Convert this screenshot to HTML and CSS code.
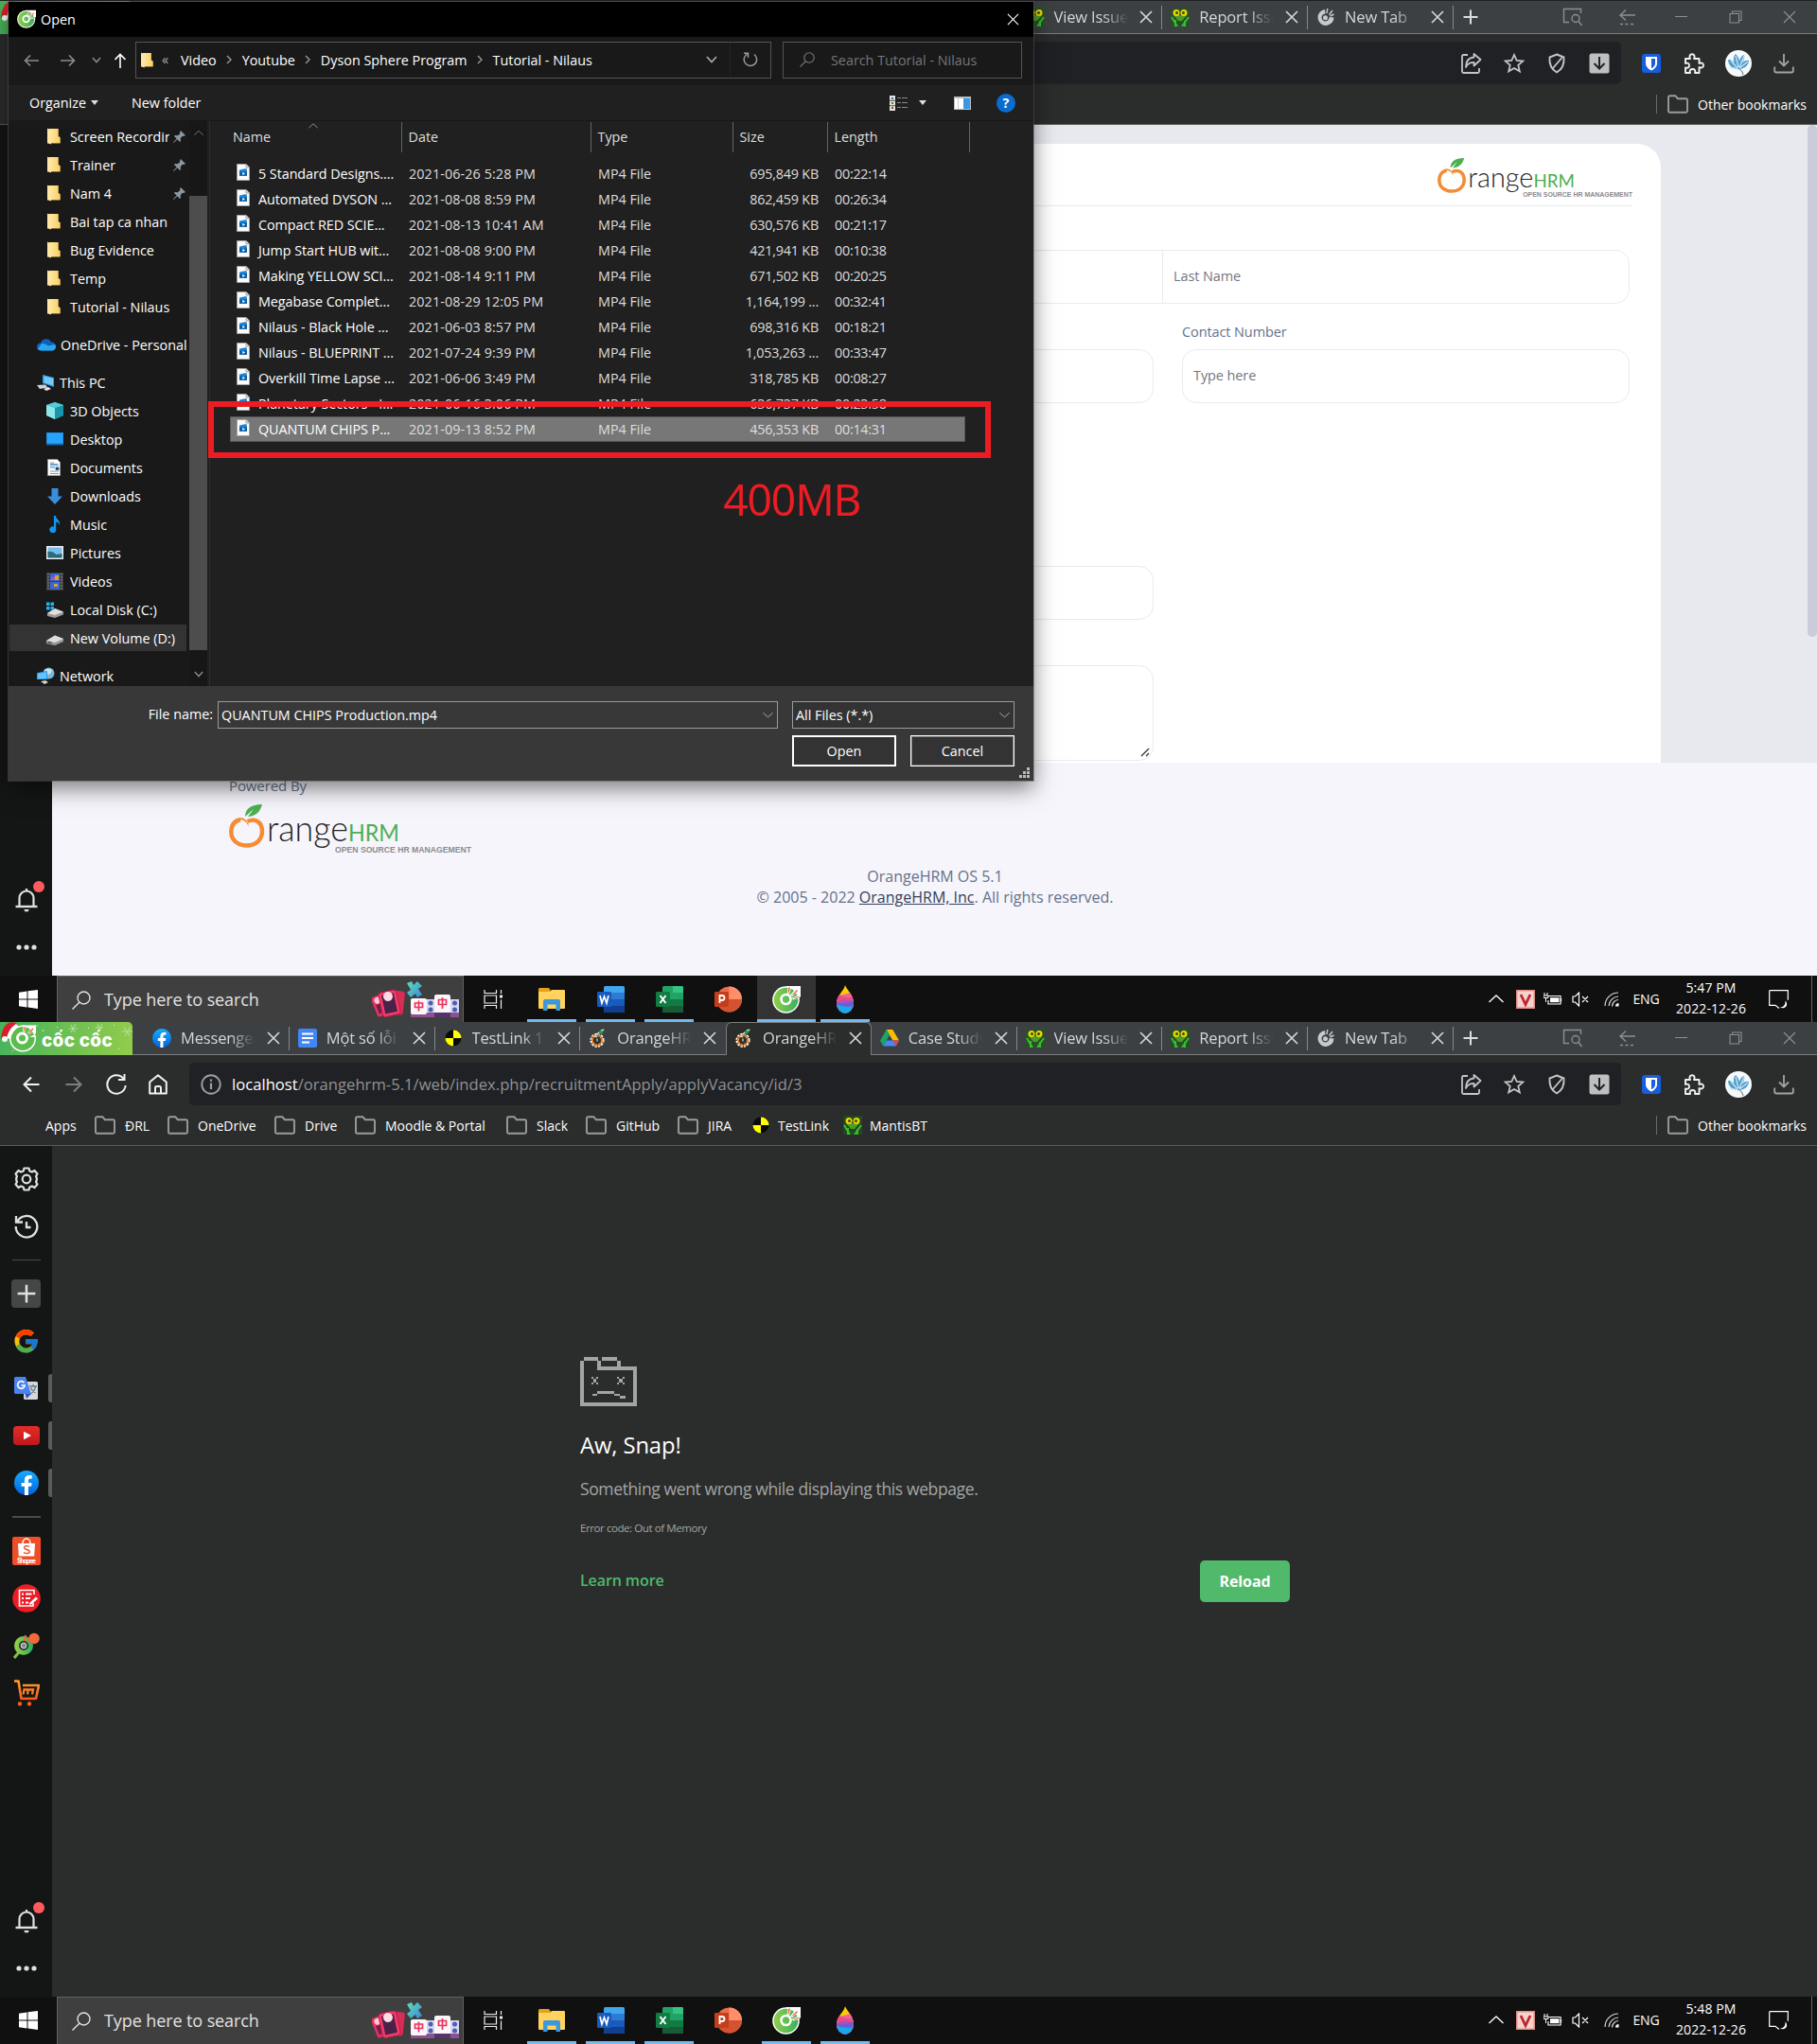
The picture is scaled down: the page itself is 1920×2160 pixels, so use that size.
FILE: index.html
```html
<!DOCTYPE html>
<html lang="en">
<head>
<meta charset="utf-8">
<title>Cốc Cốc</title>
<link rel="stylesheet" href="styles.css">
</head>
<body>
<svg class="defs" width="0" height="0" aria-hidden="true">
  <defs>
    <linearGradient id="gFold" x1="0" x2="1"><stop offset="0" stop-color="#ffe9a6"/><stop offset="1" stop-color="#f9cf63"/></linearGradient>
    <linearGradient id="gCoc" x1="0" x2="1"><stop offset="0" stop-color="#8fce4b"/><stop offset="1" stop-color="#37b25c"/></linearGradient>
    <linearGradient id="gFb" x1="0" x2="0" y1="0" y2="1"><stop offset="0" stop-color="#18acfe"/><stop offset="1" stop-color="#0163e0"/></linearGradient>
    <linearGradient id="gYt" x1="0" x2="0" y1="0" y2="1"><stop offset="0" stop-color="#e52d27"/><stop offset="1" stop-color="#bf171d"/></linearGradient>
    <linearGradient id="gCart" x1="0" x2="0" y1="0" y2="1"><stop offset="0" stop-color="#ffa12b"/><stop offset="1" stop-color="#fb5b1f"/></linearGradient>
    <linearGradient id="gPuz" x1="0" x2="1" y1="0" y2="1"><stop offset="0" stop-color="#5fe0b8"/><stop offset="1" stop-color="#3b86d8"/></linearGradient>
    <clipPath id="cDrop"><path d="M12 0c1 4 9 10 9 19a9 10.500 0 0 1-18 0C3 11 11 6 12 0z"/></clipPath>
  </defs>
  <symbol id="close" viewBox="0 0 14 14"><path d="M1 1l12 12M13 1L1 13" fill="none" stroke="currentColor" stroke-width="1.7"/></symbol>
  <symbol id="thinclose" viewBox="0 0 14 14"><path d="M1 1l12 12M13 1L1 13" fill="none" stroke="currentColor" stroke-width="1.2"/></symbol>
  <symbol id="plus" viewBox="0 0 16 16"><path d="M8 .5v15M.5 8h15" fill="none" stroke="currentColor" stroke-width="2"/></symbol>
  <symbol id="coc" viewBox="0 0 30 30"><circle cx="14.500" cy="15.500" r="14.300" fill="#fff"/><path d="M14 1h16v12z" fill="#fff"/><circle cx="14.500" cy="15.500" r="12.800" fill="url(#gCoc)"/><circle cx="14.500" cy="15" r="5" fill="none" stroke="#fff" stroke-width="2.600"/><path d="M15.500 9l1.200-7 3.500.5-2.200 7.200zM19 10.500l7-8 2.500 3-7 6.500zM21 13.500l7-3.500.8 3.500-6.800 2z" fill="#fff"/><path d="M16.500 8l.8-5.500 1.800.3L17.600 8.500zM21 10l5-5 1 1.300-5 4.500zM22.500 13.500l5-1.800.3 1.300-4.700 1.300z" fill="#f2643c"/></symbol>
  <symbol id="cocgray" viewBox="0 0 20 20"><path d="M9 2a8.500 8.500 0 1 0 9.500 8.500L13.500 10A4 4 0 1 1 9.500 6.500z" fill="#c8c9ca"/><circle cx="9.500" cy="10.800" r="2.500" fill="#c8c9ca"/><path d="M11 6l.8-5M13.500 7.500L17 3M14.500 9l4-2" stroke="#c8c9ca" stroke-width="1.500"/></symbol>
  <symbol id="fb" viewBox="0 0 24 24"><circle cx="12" cy="12" r="12" fill="url(#gFb)"/><path d="M16.700 15.500l.5-3.500h-3.400V9.800c0-1 .5-1.900 2-1.900h1.500v-3s-1.400-.2-2.700-.2c-2.700 0-4.500 1.600-4.500 4.600V12H7v3.500h3.100V24h3.700v-8.500z" fill="#fff"/></symbol>
  <symbol id="docs" viewBox="0 0 20 20"><rect width="20" height="20" rx="2" fill="#4285f4"/><path d="M4 5.500h12M4 10h12M4 14.500h8" stroke="#fff" stroke-width="2.200"/></symbol>
  <symbol id="testlink" viewBox="0 0 20 20"><circle cx="10" cy="10" r="8.500" fill="#0a0a0a"/><path d="M10 10V1.500A8.500 8.500 0 0 1 18.500 10zM10 10v8.500A8.500 8.500 0 0 1 1.500 10z" fill="#ff0"/></symbol>
  <symbol id="ohrm" viewBox="0 0 20 20"><circle cx="9" cy="12.300" r="6.300" fill="#2b3030" stroke="#fff" stroke-width="2.600" stroke-dasharray="2.200 1.100"/><circle cx="9" cy="12.300" r="5.200" fill="none" stroke="#ee8430" stroke-width="2.400" stroke-dasharray="3 .8"/><path d="M9.500 7.500C8 4 12 1 17 .5c-1 4-3 5.500-7.500 6.500z" fill="#2f8f4f"/><path d="M13 2l3-1M9 6l2-2M6 8l3 1M9 10.500v3" stroke="#eee" stroke-width="1.100"/></symbol>
  <symbol id="drive" viewBox="0 0 20 18"><path d="M6.700 0h6.600L20 11.500h-6.600z" fill="#fbbc04"/><path d="M6.700 0L10 5.700 3.300 17.500 0 11.700z" fill="#1ea362"/><path d="M3.300 17.500l3.400-6H20l-3.300 6z" fill="#4688f4"/><path d="M16.700 17.500l-3.300-6H20z" fill="#e94435"/></symbol>
  <symbol id="mantis" viewBox="0 0 20 20"><rect width="20" height="20" fill="#1d5a17" opacity=".6"/><path d="M3 8h14l-5 6H8z" fill="#4c9c28"/><path d="M1 10l6 10M19 10l-7 10M5 13v7M15 14v6" stroke="#35bf2c" stroke-width="2"/><circle cx="6" cy="5.500" r="3.500" fill="#e7d800"/><circle cx="14" cy="5.500" r="3.500" fill="#e7d800"/><circle cx="6.500" cy="5.500" r="1.500" fill="#40420a"/><circle cx="13.500" cy="5.500" r="1.500" fill="#40420a"/></symbol>
  <symbol id="folder" viewBox="0 0 22 20"><path d="M2.500 1.200h5.800l2.500 3h8.700a1.500 1.500 0 0 1 1.500 1.500v11.600a1.500 1.500 0 0 1-1.500 1.500h-17A1.500 1.500 0 0 1 1 17.300V2.700a1.500 1.500 0 0 1 1.500-1.500z" fill="none" stroke="#9a9c9b" stroke-width="1.900"/></symbol>
  <symbol id="arrow" viewBox="0 0 18 18"><path d="M17.500 9H2M9 1.500L1.500 9 9 16.500" fill="none" stroke="currentColor" stroke-width="2"/></symbol>
  <symbol id="reload" viewBox="0 0 22 22"><path d="M18.500 4.800A9.700 9.700 0 1 0 20.700 12M19.500 0v6H13" fill="none" stroke="currentColor" stroke-width="2"/></symbol>
  <symbol id="home" viewBox="0 0 20 22"><path d="M1.200 8.500L10 1.200l8.800 7.300v12H1.200zM7 20.500v-6q0-1.500 1.500-1.500h3q1.500 0 1.500 1.500v6" fill="none" stroke="currentColor" stroke-width="2" stroke-linejoin="round"/></symbol>
  <symbol id="info" viewBox="0 0 22 22"><circle cx="11" cy="11" r="9.700" fill="none" stroke="currentColor" stroke-width="1.900"/><path d="M11 9.500v6.500M11 5.500v2.300" stroke="currentColor" stroke-width="2.200"/></symbol>
  <symbol id="share" viewBox="0 0 22 22"><path d="M7 2H2.500Q1 2 1 3.500v16Q1 21 2.500 21h15q1.500 0 1.500-1.500V16M13.500 1l7 6-7 6.500V9.800C9 9.800 6.500 11.500 5 15c0-6 3-10 8.500-10.500z" fill="none" stroke="currentColor" stroke-width="1.800" stroke-linejoin="round"/></symbol>
  <symbol id="star" viewBox="0 0 22 22"><path d="M11 2l2.700 6 6.500.6-4.900 4.300 1.500 6.500L11 16l-5.800 3.400 1.500-6.500-4.900-4.300 6.500-.6z" fill="none" stroke="currentColor" stroke-width="1.800"/></symbol>
  <symbol id="shield" viewBox="0 0 22 22"><path d="M11 1.500l7.500 3c.6 7-1.500 12.500-7.500 16-6-3.500-8.100-9-7.500-16zM16.500 5L6.500 16.500" fill="none" stroke="currentColor" stroke-width="1.900"/></symbol>
  <symbol id="dlbox" viewBox="0 0 22 22"><rect x=".5" y=".5" width="21" height="21" rx="2.500" fill="#bdbfc0"/><path d="M11 4v12M5.500 11L11 16.500 16.500 11" fill="none" stroke="#222" stroke-width="2"/></symbol>
  <symbol id="bitwarden" viewBox="0 0 20 20"><rect width="20" height="20" rx="3" fill="#175ddc"/><path d="M4 3h12v7c0 3.500-3 6-6 7.500C7 16 4 13.500 4 10z" fill="#fff"/><path d="M10 5h4v5c0 2-1.500 4-4 5.300z" fill="#175ddc"/></symbol>
  <symbol id="puzzle" viewBox="0 0 22 22"><path d="M2 6h5C5.500 3 7 1.200 9 1.200S12.500 3 11 6h5.500v5c3-1.300 4.500 0 4.500 2s-1.500 3.300-4.500 2v6H12c1-3-.5-4-2.500-4S6 18 7 21H2v-5.500c3 .8 4-.5 4-2.300S5 10 2 11z" fill="none" stroke="currentColor" stroke-width="1.900" stroke-linejoin="round"/></symbol>
  <symbol id="avatar" viewBox="0 0 28 28"><circle cx="14" cy="14" r="14" fill="#f6fafc"/><path d="M14 20C7 20 3 15 3 10c4 0 6 2 7 4-2-5-1-8 1-10 3 3 4 6 4 9 0-4 2-7 5-8 1 4-1 7-3 9 3-3 6-4 8-3 0 5-5 9-11 9z" fill="#4f9dcd"/><path d="M6 11l7 8M11 6l3 12M20 6l-5 12M24 12l-9 7M5 18l8 2" stroke="#c9e4f3" stroke-width="1.300"/><path d="M15 20q3 1 4 6" stroke="#567" fill="none"/></symbol>
  <symbol id="download" viewBox="0 0 22 22"><path d="M11 1v12M6 8.500L11 13.500l5-5M1.200 14.500v4.300q0 1.700 1.700 1.700h16.200q1.700 0 1.700-1.700v-4.300" fill="none" stroke="#a2a4a3" stroke-width="1.800"/></symbol>
  <symbol id="castsearch" viewBox="0 0 22 20"><path d="M7 15.500H1.500v-14h18V6" fill="none" stroke="currentColor" stroke-width="1.400"/><circle cx="14" cy="11.500" r="4" fill="none" stroke="currentColor" stroke-width="1.400"/><path d="M17 14.500l3.500 4.500" stroke="currentColor" stroke-width="1.400"/></symbol>
  <symbol id="backdash" viewBox="0 0 20 20"><path d="M18 8H2M8 2.500L2 8l6 5.500" fill="none" stroke="currentColor" stroke-width="1.400"/><path d="M2 17.500h16" stroke="currentColor" stroke-width="1.400" stroke-dasharray="3 2.500"/></symbol>
  <symbol id="restore" viewBox="0 0 14 14"><path d="M1 3.500h9.500V13H1zM3.500 3.500V1H13v9.500h-2.500" fill="none" stroke="currentColor" stroke-width="1.100"/></symbol>

  <symbol id="gear" viewBox="0 0 26 26"><path d="M10.500 1.500h5l.8 3 2.500 1 2.700-1.500 3 3.500-1.500 2.500.8 2 .0 2-.8 2 1.500 2.500-3 3.500-2.700-1.500-2.500 1-.8 3h-5l-.8-3-2.500-1-2.700 1.500-3-3.500L3 16l-.8-2v-2L3 10 1.500 7.500l3-3.500 2.700 1.500 2.500-1z" fill="none" stroke="currentColor" stroke-width="2.200" stroke-linejoin="round"/><circle cx="13" cy="13" r="4.300" fill="none" stroke="currentColor" stroke-width="2.200"/></symbol>
  <symbol id="history" viewBox="0 0 26 26"><path d="M3 8A11.300 11.300 0 1 1 1.700 13M2 2v6.500h7M13 8v6h4.500" fill="none" stroke="currentColor" stroke-width="2.300"/></symbol>
  <symbol id="google" viewBox="0 0 48 48"><path fill="#fbbc05" d="M43.600 20H24v8.500h11.300A12 12 0 1 1 24 12c3 0 5.800 1.200 8 3l6-6A20 20 0 1 0 44 24c0-1.300-.1-2.700-.4-4z"/><path fill="#ff3d00" d="M6.300 14.700l6.600 4.800A12 12 0 0 1 32 15l6-6A20 20 0 0 0 6.300 14.700z"/><path fill="#4caf50" d="M24 44c5.200 0 9.900-2 13.400-5.200l-6.200-5.200A12 12 0 0 1 12.700 28l-6.500 5A20 20 0 0 0 24 44z"/><path fill="#1976d2" d="M43.600 20H24v8h11.300a12 12 0 0 1-4.100 5.600l6.200 5.200C37 39.200 44 34 44 24c0-1.300-.1-2.700-.4-4z"/></symbol>
  <symbol id="translate" viewBox="0 0 26 26"><rect x="10" y="6" width="15" height="19" rx="1.500" fill="#d5d8da"/><path d="M1.500 1H12l6 18H1.500Q0 19 0 17.500v-15Q0 1 1.500 1z" fill="#4a83ee"/><path d="M11.500 19H18l-5 5z" fill="#2b57c5"/><path d="M10.500 7.200A3.800 3.800 0 1 0 11.200 10H7.500" fill="none" stroke="#fff" stroke-width="1.700"/><path d="M16 11h8M20 9v2M17 19c3-1.500 5-4 5.500-8M17.500 12.500c1 2.500 3 4.500 5 5.500" stroke="#6b7c88" stroke-width="1.300" fill="none"/></symbol>
  <symbol id="youtube" viewBox="0 0 28 20"><rect width="28" height="20" rx="4" fill="url(#gYt)"/><path d="M11 5.800l8 4.200-8 4.200z" fill="#fff"/></symbol>
  <symbol id="redlist" viewBox="0 0 30 30"><circle cx="15" cy="15" r="14.800" fill="#ee1c25"/><path d="M23 11V6.500H7.500V23H22v-3" fill="none" stroke="#fff" stroke-width="1.600"/><path d="M10 10.500h2M14 10.500h6.500M10 15h2M14 15h5M10 19.500h2M14 19.500h3" stroke="#fff" stroke-width="1.800"/><path d="M17.500 20.500l7.500-7 2 2-7.500 6.500z" fill="#fff"/></symbol>
  <symbol id="cocsearch" viewBox="0 0 28 28"><path d="M6 21l-5 6" stroke="#7bc143" stroke-width="3"/><circle cx="11" cy="14" r="7.500" fill="#23282a" stroke="url(#gCoc)" stroke-width="5"/><circle cx="11" cy="14" r="3" fill="#8a8d8e" stroke="#ddd"/><path d="M12 9l1-6M15 10l4-5" stroke="#f2643c" stroke-width="2"/><circle cx="22" cy="6.500" r="5.800" fill="#f4683c"/></symbol>
  <symbol id="cart" viewBox="0 0 28 28"><path d="M1 1.500h4.500L8.500 20h15.500L27 6H10" fill="none" stroke="url(#gCart)" stroke-width="2.600" stroke-linejoin="round"/><path d="M10.500 15.500l1-5h9.500l-1 5M15.800 10.500l-.8 5" fill="none" stroke="#fb7f24" stroke-width="2.300"/><circle cx="7" cy="25.500" r="2.200" fill="#fb5b1f"/><circle cx="17" cy="25.500" r="2.200" fill="#fb5b1f"/></symbol>
  <symbol id="bell" viewBox="0 0 24 26"><path d="M12 1v2.500M4.500 19.500V11a7.500 7.500 0 0 1 15 0v8.500" fill="none" stroke="currentColor" stroke-width="2.200"/><path d="M.5 20h23" stroke="currentColor" stroke-width="2.400"/><path d="M9.500 23h5a2.500 2.500 0 0 1-5 0z" fill="currentColor"/></symbol>
  <symbol id="dots" viewBox="0 0 22 6"><circle cx="3" cy="3" r="2.600" fill="currentColor"/><circle cx="11" cy="3" r="2.600" fill="currentColor"/><circle cx="19" cy="3" r="2.600" fill="currentColor"/></symbol>

  <symbol id="win" viewBox="0 0 20 20"><path d="M0 2.800L8.500 1.500V9.500H0zM9.500 1.300L20 0v9.500H9.500zM0 10.500h8.500v8L0 17.200zM9.500 10.500H20V20L9.500 18.600z" fill="#fff"/></symbol>
  <symbol id="mag" viewBox="0 0 20 20"><circle cx="12.500" cy="7.500" r="6.500" fill="none" stroke="currentColor" stroke-width="1.400"/><path d="M7.800 12.200L.5 19.500" stroke="currentColor" stroke-width="1.400"/></symbol>
  <symbol id="games" viewBox="0 0 92 44"><g transform="rotate(-22 10 28)"><rect x="2" y="17" width="15" height="22" rx="3" fill="#e8315f"/><circle cx="8" cy="22" r="3.500" fill="#ffc9d6"/><path d="M4.500 26h9v10h-9z" fill="#70204e"/></g><g transform="rotate(6 26 24)"><rect x="16" y="13" width="18" height="25" rx="3" fill="#d92a58"/></g><g transform="rotate(-12 20 26)"><rect x="9" y="13" width="19" height="26" rx="3" fill="#f23d68" stroke="#c21d4a"/><rect x="12" y="16" width="13" height="20" fill="#4a2148"/><circle cx="18.500" cy="18.500" r="5" fill="#ffdce5"/></g><path d="M37 5l5-2 2 4 4-4 5 5-4 3 4 6-5 3-2-4-5 4-4-5 4-3z" fill="url(#gPuz)"/><path d="M41 22h51v16H41z" fill="#d9d5ee"/><path d="M41 36h51v5H41z" fill="#8a5291"/><rect x="41" y="21" width="17" height="17" rx="2" fill="#faf7fb"/><rect x="66" y="17" width="17" height="20" rx="2" fill="#faf7fb"/><path d="M66 36h17v5H66z" fill="#55336d"/><path d="M45.500 26h8v4.500h-8zM49.500 23.500v11M70.500 22.500h8v5h-8zM74.500 20v12" fill="none" stroke="#ec315c" stroke-width="1.700"/><circle cx="62" cy="26" r="2.500" fill="#4760b8"/><circle cx="62" cy="33" r="2.500" fill="#4760b8"/><circle cx="87.500" cy="26" r="2.500" fill="#4760b8"/><circle cx="87.500" cy="33" r="2.500" fill="#4760b8"/></symbol>
  <symbol id="taskview" viewBox="0 0 21 20"><path d="M1 0v3.500h12.500V0M1 20v-3.500h12.500V20M1 6h12.500v8H1zM18.500 0v4M18.500 10.500V20" fill="none" stroke="#eee" stroke-width="1.200"/><path d="M17 5.500h3v3h-3z" fill="#eee"/></symbol>
  <symbol id="explorer" viewBox="0 0 28 24"><path d="M1 0h10l2 3-2 3H0V1z" fill="#e6a117"/><path d="M0 4h12l2-2h13q1 0 1 1v18q0 1-1 1H1q-1 0-1-1z" fill="#ffd35c"/><path d="M5 24V14q0-2 2-2h14q2 0 2 2v10h-4.500v-6.500h-9V24z" fill="#3a98db"/></symbol>
  <symbol id="word" viewBox="0 0 29 28"><rect x="7" width="22" height="28" rx="1.500" fill="#41a5ee"/><path d="M7 7h22v7H7z" fill="#2b7cd3"/><path d="M7 14h22v7H7z" fill="#185abd"/><path d="M7 21h22v5.500q0 1.500-1.500 1.500h-19Q7 28 7 26.500z" fill="#103f91"/><rect y="6" width="15" height="16" rx="1.200" fill="#185abd"/><path d="M3 10l2 8 2.500-7L10 18l2-8" fill="none" stroke="#fff" stroke-width="1.700"/></symbol>
  <symbol id="excel" viewBox="0 0 29 28"><rect x="7" width="22" height="28" rx="1.500" fill="#21a366"/><path d="M18 0h9.500Q29 0 29 1.500V7H18z" fill="#33c481"/><path d="M7 14h11v7H7zM18 7h11v7H18z" fill="#21a366"/><path d="M7 14h22v7H7z" fill="#107c41"/><path d="M7 21h22v5.500q0 1.500-1.500 1.500h-19Q7 28 7 26.500z" fill="#185c37"/><rect y="6" width="15" height="16" rx="1.200" fill="#107c41"/><path d="M4.500 10l6 8M10.500 10l-6 8" fill="none" stroke="#fff" stroke-width="1.900"/></symbol>
  <symbol id="ppt" viewBox="0 0 29 28"><circle cx="15.500" cy="14" r="13.500" fill="#ed6c47"/><path d="M15.500.5A13.500 13.500 0 0 1 29 14H15.500z" fill="#ff8f6b"/><path d="M2 14h27a13.500 13.500 0 0 1-27 0z" fill="#d35230"/><rect y="6" width="15" height="16" rx="1.200" fill="#c43e1c"/><path d="M5.500 18v-8H8q2.500 0 2.500 2.500T8 15H5.500" fill="none" stroke="#fff" stroke-width="1.800"/></symbol>
  <symbol id="paint" viewBox="0 0 24 30"><g clip-path="url(#cDrop)"><rect width="24" height="30" fill="#ffcc00"/><path d="M0 10q10 2 24-5v25H0z" fill="#f0659c"/><path d="M0 8q12 8 24 4v7H0z" fill="#ee4b80"/><path d="M0 20Q8 14 16 16T24 13v17H0z" fill="#a950c4"/><path d="M0 20q12 0 24-4v14H0z" fill="#6b5fd0"/><path d="M0 19q10 6 24 3v8H0z" fill="#17a8ee"/></g></symbol>
  <symbol id="chev" viewBox="0 0 16 9"><path d="M.5 8L8 1l7.500 7" fill="none" stroke="currentColor" stroke-width="1.300"/></symbol>
  <symbol id="vkey" viewBox="0 0 20 20"><rect width="20" height="20" fill="#e08a86"/><rect x="1.500" y="1.500" width="17" height="17" fill="#f6d3cf"/><path d="M5 5l5 10.500L15 5" fill="none" stroke="#c0262b" stroke-width="2.800"/></symbol>
  <symbol id="battery" viewBox="0 0 20 14"><path d="M5 3.500h13v8.500H5V8M18.500 6v3.500" fill="none" stroke="#fff" stroke-width="1.200"/><path d="M7 5.200h9.500v5H7z" fill="#fff"/><path d="M1 0v3M4 0v3M0 3h5v2.500H0zM2.500 5v5" fill="none" stroke="#fff"/></symbol>
  <symbol id="mute" viewBox="0 0 19 16"><path d="M1 5h2.500L7.500 1v14l-4-4H1zM11 5l6 6M17 5l-6 6" fill="none" stroke="#fff" stroke-width="1.200"/></symbol>
  <symbol id="wifi" viewBox="0 0 16 16"><path d="M1 15A14 14 0 0 1 15 1M5 15A10.500 10.500 0 0 1 15 5M8.500 15.500A7 7 0 0 1 15 8.500" fill="none" stroke="#d8d8d8" stroke-width="1.200"/><path d="M12 15.500a3.500 3.500 0 0 1 3.500-3.500v3.500z" fill="#fff"/></symbol>
  <symbol id="notif" viewBox="0 0 21 20"><path d="M.7.700h19.600v10M.7.700v15.600H7l4 3.200" fill="none" stroke="#fff" stroke-width="1.200"/><path d="M17.500 11.500a4.200 4.200 0 1 1-5.500 6.800c3 .5 6-2.300 5.500-6.800z" fill="#fff"/></symbol>

  <symbol id="yfolder" viewBox="0 0 14 18"><path d="M0 1.500L8 1h3.500v8l2 1v6.500H0z" fill="#eebc55"/><path d="M2 1h9.500v8.500l2 .8V16H2z" fill="url(#gFold)"/><path d="M0 .500l4 2.500v14.500L0 16z" fill="#ffe7a3"/></symbol>
  <symbol id="pin" viewBox="0 0 14 14"><path d="M8.500 0L14 5.500l-1.500.7-2.200.3-2 2.500.2 3-1 1L4.800 10 .5 14 0 13.500 4 9.200 1 6.500l1-1 3 .2 2.500-2L7.800 1.500z" fill="#8b97a2"/></symbol>
  <symbol id="cloud" viewBox="0 0 20 13"><path d="M4 5a6 6 0 0 1 11-1 4.500 4.500 0 0 1 5 4.500q0 4-4 4.500H4a4 4 0 0 1 0-8z" fill="#0f5fbd"/><path d="M5 5.500Q9 5 12 8l7-1.500A4 4 0 0 1 16 13H4.500Q2 12.500 1 11z" fill="#28a8ea"/></symbol>
  <symbol id="pc" viewBox="0 0 19 17"><path d="M6 0l12 3v10L6 9z" fill="#2f9fe8"/><path d="M7.500 1.500l9.500 2.300v7.500L7.500 8.300z" fill="#74c9fb"/><path d="M0 11l9-.5 2.500 3L3 15z" fill="#cdd3d7"/><path d="M7 15l5-2 3 2-5 2z" fill="#e2e6e8"/></symbol>
  <symbol id="cube" viewBox="0 0 18 18"><path d="M9 0l9 3v11l-9 4-9-4V3z" fill="#34b6c8"/><path d="M9 6l9-3v11l-9 4z" fill="#1795ad"/><path d="M0 3l9 3v12l-9-4z" fill="#8fe6e6"/><path d="M0 3l9-3 9 3-9 3z" fill="#55cbd8"/></symbol>
  <symbol id="desk" viewBox="0 0 18 14"><rect width="18" height="13" fill="#1b8fe6"/><path d="M1 1h16v10H1z" fill="#27a3fb"/><path d="M0 12h18v1.500H0z" fill="#0a67b3"/></symbol>
  <symbol id="doc" viewBox="0 0 14 18"><path d="M.5.500h10l3 3v14H.5z" fill="#fff" stroke="#999"/><path d="M3 4h4M3 7h9M3 13h9M3 15.500h9" stroke="#8a8f93"/><path d="M3 5.500h8M3 9h5M9 9h3v2.500H9z" stroke="#2e8ad8"/></symbol>
  <symbol id="ddown" viewBox="0 0 16 17"><path d="M4.500 0h7v8.500H16l-8 8.500L0 8.500h4.500z" fill="#3a8fdc"/></symbol>
  <symbol id="note" viewBox="0 0 12 18"><path d="M5 0h2c0 4 5 4.500 4 10-.5-2-2-3-3.800-3.400V14A3.500 3.500 0 1 1 5 11.500z" fill="#1296f0"/></symbol>
  <symbol id="pic" viewBox="0 0 18 14"><rect width="18" height="14" fill="#f1f3f5"/><path d="M1.500 1.500h15v11h-15z" fill="#79bdec"/><path d="M1.500 6q5-1 9 3l6-1v4.500h-15z" fill="#2d6a77"/></symbol>
  <symbol id="film" viewBox="0 0 18 19"><rect width="18" height="19" fill="#3c3c3c"/><path d="M4 1h10v8H4zM4 10h10v8H4z" fill="#3b66d6"/><path d="M5 5h4v3H5z" fill="#d0499f"/><path d="M9 3h4v5H9zM8 12h4v3H8z" fill="#d9a422"/><path d="M2 1v18M16 1v18" stroke="#999" stroke-width="1.200" stroke-dasharray="1.500 1.500"/></symbol>
  <symbol id="disk" viewBox="0 0 18 11"><path d="M0 6l9-5.500 9 3.500v3L9 11 0 9z" fill="#9b9b9b"/><path d="M0 6l9-5.500L18 4l-9 4z" fill="#dedede"/><path d="M1.500 7.500l4 .8" stroke="#333" stroke-width="1.200"/></symbol>
  <symbol id="cdisk" viewBox="0 0 18 17"><path d="M1 12l8-5 9 3.500v3L9 17l-8-2z" fill="#9b9b9b"/><path d="M1 12l8-5 9 3.500L9 14z" fill="#dedede"/><path d="M0 .500h3.500V4H0zM4.500.500H8V4H4.500zM0 5h3.500v3.500H0zM4.500 5H8v3.500H4.500z" fill="#1fb4f4"/></symbol>
  <symbol id="net" viewBox="0 0 19 18"><circle cx="12.500" cy="6.500" r="6" fill="#7db7d8"/><path d="M8 3q4-3 8 0-1 4-4 5z" fill="#c8e2ee"/><path d="M0 6l11-2v9L0 13z" fill="#2d9ce8"/><path d="M1 7l9-1.700V12l-9 .3z" fill="#69c1fa"/><path d="M4 15l5-1 3 2-4 2z" fill="#cfd5d8"/></symbol>
  <symbol id="mp4" viewBox="0 0 14 18"><path d="M.5.500H10L13.500 4v13.500H.5z" fill="#fbfbfb" stroke="#a3a3a3"/><path d="M10 .500V4h3.500" fill="#ddd" stroke="#a3a3a3"/><path d="M3 6.500L10.500 5v1.500H11v6.300H3z" fill="#1b86d6"/><path d="M3 8.500h8v4.300H3z" fill="#0d5da6"/><path d="M6.300 8.700l2.700 1.700-2.700 1.700z" fill="#fff"/></symbol>
  <symbol id="darrow" viewBox="0 0 16 12"><path d="M16 6H1.500M7 .500L1.500 6 7 11.500" fill="none" stroke="currentColor" stroke-width="1.600"/></symbol>
  <symbol id="dv" viewBox="0 0 12 8"><path d="M1 1l5 5.500L11 1" fill="none" stroke="currentColor" stroke-width="1.700"/></symbol>
  <symbol id="dr" viewBox="0 0 6 10"><path d="M1 1l4 4-4 4" fill="none" stroke="currentColor" stroke-width="1.400"/></symbol>
  <symbol id="tri" viewBox="0 0 8 5"><path d="M0 0h8L4 5z" fill="#ddd"/></symbol>
  <symbol id="drel" viewBox="0 0 16 16"><path d="M12 2.500A6.700 6.700 0 1 1 5 1.800M1 1.300h4.500V6" fill="none" stroke="#999" stroke-width="1.500"/></symbol>

  <symbol id="orange" viewBox="0 0 40 52"><path d="M17 13C17 5 23 0 35 0c-2 7-5 12-15 13l6-8z" fill="#4caf50"/><path d="M12 16C4.500 18 2.300 24 2.300 29c0 9 7 14.500 16.500 14.500s16.200-6 16.200-15S28.500 14 19.500 18" fill="none" stroke="#f58b33" stroke-width="4.400"/><path d="M9 16q8-1 12 7.500-1-7.500-8-9.500zM18.500 18q7-6 13-1z" fill="#f58b33"/></symbol>
  <symbol id="cocbanner" viewBox="0 0 140 35"><path d="M75 3l4 8M80 2l-5 9M73 7h9M103 2l3 7M108 2l-4 8M101 6h8M131 5l6 10M138 5l-6 10M129 10h11M36 4h4" stroke="#b9e19a" stroke-width="1"/><path d="M45 8l1 2M60 5l1 1M93 6l1 1M120 3l1 1M13 30l1 1M125 28l1 1" stroke="#dff3c8"/><circle cx="24" cy="17.500" r="14" fill="#fff"/><path d="M23 3.500h15v9z" fill="#fff"/><circle cx="24" cy="17.500" r="12.500" fill="#5bbd4d"/><circle cx="23.500" cy="17" r="5" fill="none" stroke="#fff" stroke-width="3"/><path d="M24 9l1-5 3 1-2 6zM29 11l6-6 1.500 2-5 6zM31 16l6-3v3z" fill="#fff"/><path d="M25 9l.7-4 1.600.4L26 9.500zM30 11l4.500-4.500 1 1-4 4.500z" fill="#f2643c"/><path d="M1 18C2 6 7-2 17 1l2 3Q12 6 7 18z" fill="#d6212a"/><path d="M17 2l3 3Q13 9 11 18l-4-1Q9 7 17 2z" fill="#fff"/><circle cx="5" cy="18" r="3" fill="#fff"/></symbol>
</svg>

<section class="screen screen-form">
  <header class="browser">
    <div class="tabs">
      <div class="brand"><svg width="140" height="35"><use href="#cocbanner"/></svg></div>
      <div class="tab-space"></div>
      <div class="tab"><svg class="fav"><use href="#mantis"/></svg><span class="title">View Issues</span><svg class="x"><use href="#close"/></svg></div>
      <div class="tab"><svg class="fav"><use href="#mantis"/></svg><span class="title">Report Issue</span><svg class="x"><use href="#close"/></svg></div>
      <div class="tab"><svg class="fav"><use href="#cocgray"/></svg><span class="title">New Tab</span><svg class="x"><use href="#close"/></svg></div>
      <svg class="newtab"><use href="#plus"/></svg>
      <div class="winbtns"><svg width="22" height="20"><use href="#castsearch"/></svg><svg width="20" height="20"><use href="#backdash"/></svg><i class="min"></i><svg width="14" height="14"><use href="#restore"/></svg><svg width="14" height="14"><use href="#thinclose"/></svg></div>
    </div>
    <div class="toolbar">
      <div class="nav"></div>
      <div class="omnibox"><div class="actions"><svg><use href="#share"/></svg><svg><use href="#star"/></svg><svg><use href="#shield"/></svg><svg><use href="#dlbox"/></svg></div></div>
      <div class="ext"><svg width="20" height="20"><use href="#bitwarden"/></svg><svg><use href="#puzzle"/></svg><svg width="28" height="28"><use href="#avatar"/></svg><svg><use href="#download"/></svg></div>
    </div>
    <div class="bookmarks"><div class="bm-other"><svg class="fold"><use href="#folder"/></svg><span>Other bookmarks</span></div></div>
  </header>
  <div class="content">
    <aside class="side"><div class="side-end"><div class="cell bell"><svg width="24" height="26"><use href="#bell"/></svg><i></i></div><div class="cell"><svg width="22" height="6"><use href="#dots"/></svg></div></div></aside>
    <main class="page">
      <div class="stage">
        <div class="card">
          <div class="card-head"><svg class="logo" width="206" height="42" viewBox="0 0 256 52"><use href="#orange" width="40" height="52"/><text class="l-range" x="40" y="39" textLength="86" lengthAdjust="spacingAndGlyphs">range</text><text class="l-hrm" x="126" y="39" textLength="54" lengthAdjust="spacingAndGlyphs">HRM</text><text class="l-tag" x="112" y="50.500" textLength="144" lengthAdjust="spacingAndGlyphs">OPEN SOURCE HR MANAGEMENT</text></svg></div>
          <div class="names"><div class="field mid"></div><div class="field last"><span>Last Name</span></div></div>
          <div class="cols contact"><div class="field"></div><div><label>Contact Number</label><div class="field"><span>Type here</span></div></div></div>
          <div class="cols keywords"><div class="field"></div></div>
          <div class="cols notes"><div class="field area"><svg width="10" height="10" viewBox="0 0 10 10"><path d="M1 9l8-8M6 9l3-3" stroke="#333" stroke-width="1.300"/></svg></div></div>
        </div>
      </div>
      <div class="powered"><p>Powered By</p><svg class="logo" width="256" height="52" viewBox="0 0 256 52"><use href="#orange" width="40" height="52"/><text class="l-range" x="40" y="39" textLength="86" lengthAdjust="spacingAndGlyphs">range</text><text class="l-hrm" x="126" y="39" textLength="54" lengthAdjust="spacingAndGlyphs">HRM</text><text class="l-tag" x="112" y="50.500" textLength="144" lengthAdjust="spacingAndGlyphs">OPEN SOURCE HR MANAGEMENT</text></svg></div>
      <footer><p>OrangeHRM OS 5.1</p><p>© 2005 - 2022 <u>OrangeHRM, Inc</u>. All rights reserved.</p></footer>
      <div class="thumb"></div>
    </main>
  </div>
  <footer class="taskbar">
    <div class="start"><svg width="20" height="20"><use href="#win"/></svg></div>
    <div class="search"><svg width="20" height="20"><use href="#mag"/></svg><span>Type here to search</span><svg class="games" width="92" height="44"><use href="#games"/></svg></div>
    <div class="tv"><svg width="21" height="20"><use href="#taskview"/></svg></div>
    <div class="apps"><div class="on"><svg width="28" height="24"><use href="#explorer"/></svg></div><div class="on"><svg width="29" height="28"><use href="#word"/></svg></div><div class="on"><svg width="29" height="28"><use href="#excel"/></svg></div><div><svg width="29" height="28"><use href="#ppt"/></svg></div><div class="on active"><svg width="30" height="30"><use href="#coc"/></svg></div><div class="on"><svg width="24" height="30"><use href="#paint"/></svg></div></div>
    <div class="tray"><svg width="16" height="9"><use href="#chev"/></svg><svg width="20" height="20"><use href="#vkey"/></svg><svg width="20" height="14"><use href="#battery"/></svg><svg width="19" height="16"><use href="#mute"/></svg><svg width="16" height="16"><use href="#wifi"/></svg><span class="lang">ENG</span><div class="clock"><span>5:47 PM</span><span>2022-12-26</span></div><svg width="21" height="20"><use href="#notif"/></svg></div>
  </footer>

  <div class="dialog">
    <div class="d-title"><svg width="20" height="20"><use href="#coc"/></svg><span>Open</span><svg class="d-close" width="13" height="13"><use href="#thinclose"/></svg></div>
    <div class="d-nav">
      <div class="d-arrows"><svg width="16" height="12"><use href="#darrow"/></svg><svg class="flip" width="16" height="12"><use href="#darrow"/></svg><svg width="10" height="7"><use href="#dv"/></svg><svg class="up" width="16" height="12"><use href="#darrow"/></svg></div>
      <div class="d-addr"><svg width="13" height="17"><use href="#yfolder"/></svg><b>«</b><span>Video</span><svg class="sep" width="6" height="10"><use href="#dr"/></svg><span>Youtube</span><svg class="sep" width="6" height="10"><use href="#dr"/></svg><span>Dyson Sphere Program</span><svg class="sep" width="6" height="10"><use href="#dr"/></svg><span>Tutorial - Nilaus</span><svg class="drop" width="12" height="8"><use href="#dv"/></svg><div class="ref"><svg width="16" height="16"><use href="#drel"/></svg></div></div>
      <div class="d-search"><svg width="16" height="16"><use href="#mag"/></svg><span>Search Tutorial - Nilaus</span></div>
    </div>
    <div class="d-tools"><span>Organize</span><svg class="ot" width="8" height="5"><use href="#tri"/></svg><span class="nf">New folder</span>
      <svg class="view" width="19" height="16" viewBox="0 0 19 16"><path d="M0 0h6v16H0z" fill="#e3e3e3"/><path d="M2 2h2v2H2z" fill="#2a7b86"/><path d="M2 7h2v2H2z" fill="#79761b"/><path d="M2 12h2v2H2z" fill="#b03a24"/><path d="M0 5.300h6M0 10.700h6" stroke="#555"/><path d="M8 2.500h4M13 2.500h6M8 7.500h4M13 7.500h6M8 12.500h4M13 12.500h6" stroke="#888"/></svg>
      <svg class="vt" width="8" height="5"><use href="#tri"/></svg>
      <svg class="pane" width="18" height="14" viewBox="0 0 18 14"><path d="M0 0h18v14H0z" fill="#b9bec2"/><path d="M1 2h9v11H1z" fill="#fff"/><path d="M10 2h7v11h-7z" fill="#3a97e6"/><path d="M4.500 2v11" stroke="#ccc"/></svg>
      <span class="help">?</span>
    </div>
    <div class="d-body">
      <div class="tree">
        <div class="node"><svg width="14" height="18"><use href="#yfolder"/></svg><span class="clip">Screen Recordings</span><svg class="pin"><use href="#pin"/></svg></div>
        <div class="node"><svg width="14" height="18"><use href="#yfolder"/></svg><span>Trainer</span><svg class="pin"><use href="#pin"/></svg></div>
        <div class="node"><svg width="14" height="18"><use href="#yfolder"/></svg><span>Nam 4</span><svg class="pin"><use href="#pin"/></svg></div>
        <div class="node"><svg width="14" height="18"><use href="#yfolder"/></svg><span>Bai tap ca nhan</span></div>
        <div class="node"><svg width="14" height="18"><use href="#yfolder"/></svg><span>Bug Evidence</span></div>
        <div class="node"><svg width="14" height="18"><use href="#yfolder"/></svg><span>Temp</span></div>
        <div class="node"><svg width="14" height="18"><use href="#yfolder"/></svg><span>Tutorial - Nilaus</span></div>
        <div class="node root"><svg width="20" height="14"><use href="#cloud"/></svg><span>OneDrive - Personal</span></div>
        <div class="node root"><svg width="19" height="17"><use href="#pc"/></svg><span>This PC</span></div>
        <div class="node"><svg width="18" height="18"><use href="#cube"/></svg><span>3D Objects</span></div>
        <div class="node"><svg width="18" height="14"><use href="#desk"/></svg><span>Desktop</span></div>
        <div class="node"><svg width="14" height="18"><use href="#doc"/></svg><span>Documents</span></div>
        <div class="node"><svg width="16" height="17"><use href="#ddown"/></svg><span>Downloads</span></div>
        <div class="node"><svg width="12" height="18"><use href="#note"/></svg><span>Music</span></div>
        <div class="node"><svg width="18" height="14"><use href="#pic"/></svg><span>Pictures</span></div>
        <div class="node"><svg width="18" height="19"><use href="#film"/></svg><span>Videos</span></div>
        <div class="node"><svg width="18" height="17"><use href="#cdisk"/></svg><span>Local Disk (C:)</span></div>
        <div class="node sel"><svg width="18" height="17" viewBox="0 -5 18 17"><use href="#disk" width="18" height="11"/></svg><span>New Volume (D:)</span></div>
        <div class="node root"><svg width="19" height="18"><use href="#net"/></svg><span>Network</span></div>
      </div>
      <div class="tscroll"><svg width="10" height="7"><use href="#chev"/></svg><i></i><svg width="10" height="7"><use href="#dv"/></svg></div>
      <div class="list">
        <div class="lhead"><span>Name<svg width="10" height="6"><use href="#chev"/></svg></span><span>Date</span><span>Type</span><span>Size</span><span>Length</span></div>
        <div class="rows">
          <div class="row"><svg><use href="#mp4"/></svg><span>5 Standard Designs....</span><span>2021-06-26 5:28 PM</span><span>MP4 File</span><span>695,849 KB</span><span>00:22:14</span></div>
          <div class="row"><svg><use href="#mp4"/></svg><span>Automated DYSON ...</span><span>2021-08-08 8:59 PM</span><span>MP4 File</span><span>862,459 KB</span><span>00:26:34</span></div>
          <div class="row"><svg><use href="#mp4"/></svg><span>Compact RED SCIE...</span><span>2021-08-13 10:41 AM</span><span>MP4 File</span><span>630,576 KB</span><span>00:21:17</span></div>
          <div class="row"><svg><use href="#mp4"/></svg><span>Jump Start HUB wit...</span><span>2021-08-08 9:00 PM</span><span>MP4 File</span><span>421,941 KB</span><span>00:10:38</span></div>
          <div class="row"><svg><use href="#mp4"/></svg><span>Making YELLOW SCI...</span><span>2021-08-14 9:11 PM</span><span>MP4 File</span><span>671,502 KB</span><span>00:20:25</span></div>
          <div class="row"><svg><use href="#mp4"/></svg><span>Megabase Complet...</span><span>2021-08-29 12:05 PM</span><span>MP4 File</span><span>1,164,199 ...</span><span>00:32:41</span></div>
          <div class="row"><svg><use href="#mp4"/></svg><span>Nilaus - Black Hole ...</span><span>2021-06-03 8:57 PM</span><span>MP4 File</span><span>698,316 KB</span><span>00:18:21</span></div>
          <div class="row"><svg><use href="#mp4"/></svg><span>Nilaus - BLUEPRINT ...</span><span>2021-07-24 9:39 PM</span><span>MP4 File</span><span>1,053,263 ...</span><span>00:33:47</span></div>
          <div class="row"><svg><use href="#mp4"/></svg><span>Overkill Time Lapse ...</span><span>2021-06-06 3:49 PM</span><span>MP4 File</span><span>318,785 KB</span><span>00:08:27</span></div>
          <div class="row"><svg><use href="#mp4"/></svg><span>Planetary Sectors - I...</span><span>2021-06-16 3:06 PM</span><span>MP4 File</span><span>636,737 KB</span><span>00:23:58</span></div>
          <div class="row picked"><svg><use href="#mp4"/></svg><span>QUANTUM CHIPS P...</span><span>2021-09-13 8:52 PM</span><span>MP4 File</span><span>456,353 KB</span><span>00:14:31</span></div>
        </div>
      </div>
    </div>
    <div class="d-foot">
      <div class="line"><span class="fn">File name:</span><div class="combo name"><span>QUANTUM CHIPS Production.mp4</span><svg width="11" height="7"><use href="#chev"/></svg></div><div class="combo type"><span>All Files (*.*)</span><svg width="11" height="7"><use href="#chev"/></svg></div></div>
      <div class="line btns"><div class="btn main">Open</div><div class="btn">Cancel</div></div>
      <svg class="grip" width="12" height="12" viewBox="0 0 12 12"><path d="M9 0h3v3H9zM5 4h3v3H5zM9 4h3v3H9zM1 8h3v3H1zM5 8h3v3H5zM9 8h3v3H9z" fill="#bbb"/></svg>
    </div>
  </div>
  <div class="mark-box"></div>
  <div class="mark-text">400MB</div>
</section>

<section class="screen">
  <header class="browser">
    <div class="tabs">
      <div class="brand"><svg width="140" height="35"><use href="#cocbanner"/></svg><span>cốc cốc</span></div>
      <div class="tab first"><svg class="fav"><use href="#fb"/></svg><span class="title">Messenger</span><svg class="x"><use href="#close"/></svg></div>
      <div class="tab"><svg class="fav"><use href="#docs"/></svg><span class="title">Một số lỗi th</span><svg class="x"><use href="#close"/></svg></div>
      <div class="tab"><svg class="fav"><use href="#testlink"/></svg><span class="title">TestLink 1.9</span><svg class="x"><use href="#close"/></svg></div>
      <div class="tab nosep"><svg class="fav"><use href="#ohrm"/></svg><span class="title">OrangeHRM</span><svg class="x"><use href="#close"/></svg></div>
      <div class="tab current"><svg class="fav"><use href="#ohrm"/></svg><span class="title">OrangeHRM</span><svg class="x"><use href="#close"/></svg></div>
      <div class="tab"><svg class="fav"><use href="#drive"/></svg><span class="title">Case Study</span><svg class="x"><use href="#close"/></svg></div>
      <div class="tab"><svg class="fav"><use href="#mantis"/></svg><span class="title">View Issues</span><svg class="x"><use href="#close"/></svg></div>
      <div class="tab"><svg class="fav"><use href="#mantis"/></svg><span class="title">Report Issue</span><svg class="x"><use href="#close"/></svg></div>
      <div class="tab"><svg class="fav"><use href="#cocgray"/></svg><span class="title">New Tab</span><svg class="x"><use href="#close"/></svg></div>
      <svg class="newtab"><use href="#plus"/></svg>
      <div class="winbtns"><svg width="22" height="20"><use href="#castsearch"/></svg><svg width="20" height="20"><use href="#backdash"/></svg><i class="min"></i><svg width="14" height="14"><use href="#restore"/></svg><svg width="14" height="14"><use href="#thinclose"/></svg></div>
    </div>
    <div class="toolbar">
      <div class="nav"><svg width="18" height="18"><use href="#arrow"/></svg><svg class="flip dim" width="18" height="18"><use href="#arrow"/></svg><svg><use href="#reload"/></svg><svg width="20" height="22"><use href="#home"/></svg></div>
      <div class="omnibox"><svg class="info"><use href="#info"/></svg><span class="url"><em>localhost</em>/orangehrm-5.1/web/index.php/recruitmentApply/applyVacancy/id/3</span><div class="actions"><svg><use href="#share"/></svg><svg><use href="#star"/></svg><svg><use href="#shield"/></svg><svg><use href="#dlbox"/></svg></div></div>
      <div class="ext"><svg width="20" height="20"><use href="#bitwarden"/></svg><svg><use href="#puzzle"/></svg><svg width="28" height="28"><use href="#avatar"/></svg><svg><use href="#download"/></svg></div>
    </div>
    <div class="bookmarks">
      <div class="bm-list">
        <div>Apps</div>
        <div><svg class="fold"><use href="#folder"/></svg><span>ĐRL</span></div>
        <div><svg class="fold"><use href="#folder"/></svg><span>OneDrive</span></div>
        <div><svg class="fold"><use href="#folder"/></svg><span>Drive</span></div>
        <div><svg class="fold"><use href="#folder"/></svg><span>Moodle &amp; Portal</span></div>
        <div><svg class="fold"><use href="#folder"/></svg><span>Slack</span></div>
        <div><svg class="fold"><use href="#folder"/></svg><span>GitHub</span></div>
        <div><svg class="fold"><use href="#folder"/></svg><span>JIRA</span></div>
        <div class="tight"><svg class="fav"><use href="#testlink"/></svg><span>TestLink</span></div>
        <div class="tight"><svg class="fav"><use href="#mantis"/></svg><span>MantisBT</span></div>
      </div>
      <div class="bm-other"><svg class="fold"><use href="#folder"/></svg><span>Other bookmarks</span></div>
    </div>
  </header>
  <div class="content">
    <aside class="side">
      <div class="cell"><svg width="26" height="26"><use href="#gear"/></svg></div>
      <div class="cell"><svg width="26" height="26"><use href="#history"/></svg></div>
      <hr>
      <div class="cell"><div class="addbox"><svg width="20" height="20"><use href="#plus"/></svg></div></div>
      <div class="cell"><svg width="29" height="29"><use href="#google"/></svg></div>
      <div class="cell nub"><svg width="26" height="26"><use href="#translate"/></svg></div>
      <div class="cell nub"><svg width="28" height="20"><use href="#youtube"/></svg></div>
      <div class="cell nub"><svg width="26" height="26"><use href="#fb"/></svg></div>
      <hr>
      <div class="cell"><svg width="30" height="30" viewBox="0 0 30 30"><rect width="30" height="30" rx="2" fill="#f04e28"/><path d="M6 7h18l-.8 13.500H6.800z" fill="#fff"/><path d="M11 7a4 5 0 0 1 8 0" fill="none" stroke="#fff" stroke-width="1.500"/><path d="M18 10.500c-1.500-1.300-5.500-1.200-5.500 1s5.800 1.800 5.800 4.200-4.500 2.300-6.300.8" fill="none" stroke="#f04e28" stroke-width="1.400"/><text class="shop" x="15" y="28" text-anchor="middle" textLength="20">Shopee</text></svg></div>
      <div class="cell"><svg width="30" height="30"><use href="#redlist"/></svg></div>
      <div class="cell"><svg width="28" height="28"><use href="#cocsearch"/></svg></div>
      <div class="cell"><svg width="28" height="28"><use href="#cart"/></svg></div>
      <div class="side-end"><div class="cell bell"><svg width="24" height="26"><use href="#bell"/></svg><i></i></div><div class="cell"><svg width="22" height="6"><use href="#dots"/></svg></div></div>
    </aside>
    <main class="crash">
      <div class="snap">
        <svg width="60" height="52" viewBox="0 0 60 52" shape-rendering="crispEdges"><path d="M2 4v46h56V12H20V4M4 2h15M23 2h16M41 4v7" fill="none" stroke="#a3a5a4" stroke-width="3.500"/><path d="M12 21h2v2h-2zM17 21h2v2h-2zM14 23h3v4h-3zM12 27h2v2h-2zM17 27h2v2h-2zM39 21h2v2h-2zM45 21h2v2h-2zM41 23h4v4h-4zM39 27h2v2h-2zM45 27h2v2h-2zM18 36h18v2.500H18zM13 38.500h5V41h-5zM36 38.500h6V41h-6zM42 41h6v2.500h-6z" fill="#a3a5a4"/></svg>
        <h1>Aw, Snap!</h1>
        <p class="msg">Something went wrong while displaying this webpage.</p>
        <p class="code">Error code: Out of Memory</p>
        <div class="acts"><span class="learn">Learn more</span><span class="reload">Reload</span></div>
      </div>
    </main>
  </div>
  <footer class="taskbar">
    <div class="start"><svg width="20" height="20"><use href="#win"/></svg></div>
    <div class="search"><svg width="20" height="20"><use href="#mag"/></svg><span>Type here to search</span><svg class="games" width="92" height="44"><use href="#games"/></svg></div>
    <div class="tv"><svg width="21" height="20"><use href="#taskview"/></svg></div>
    <div class="apps"><div class="on"><svg width="28" height="24"><use href="#explorer"/></svg></div><div class="on"><svg width="29" height="28"><use href="#word"/></svg></div><div class="on"><svg width="29" height="28"><use href="#excel"/></svg></div><div><svg width="29" height="28"><use href="#ppt"/></svg></div><div class="on"><svg width="30" height="30"><use href="#coc"/></svg></div><div class="on"><svg width="24" height="30"><use href="#paint"/></svg></div></div>
    <div class="tray"><svg width="16" height="9"><use href="#chev"/></svg><svg width="20" height="20"><use href="#vkey"/></svg><svg width="20" height="14"><use href="#battery"/></svg><svg width="19" height="16"><use href="#mute"/></svg><svg width="16" height="16"><use href="#wifi"/></svg><span class="lang">ENG</span><div class="clock"><span>5:48 PM</span><span>2022-12-26</span></div><svg width="21" height="20"><use href="#notif"/></svg></div>
  </footer>
</section>
</body>
</html>
```
FILE: styles.css
```css
* { box-sizing: border-box; }
body { margin: 0; width: 1920px; height: 2160px; overflow: hidden; background: #111; font-family: "Open Sans", "Noto Sans", sans-serif; font-size: 14px; letter-spacing: -0.1px; color: #fff; }
p, h1, hr { margin: 0; }
svg { display: block; flex: none; }
.defs { position: absolute; }
.flip { transform: scaleX(-1); }

.screen { position: relative; display: flex; flex-direction: column; height: 1080px; overflow: hidden; }
.screen-form { padding-top: 1px; background: #202124; }
.browser { flex: none; height: 131px; background: #2b2d2c; border-bottom: 1px solid #5b5d5c; }

/* tab strip */
.tabs { display: flex; height: 35px; background: #3c4043; box-shadow: inset 0 -1px #7b7d7f; }
.brand { position: relative; width: 140px; margin-right: 12px; background: linear-gradient(100deg, #47b35b, #92cc4b); border-top-right-radius: 5px; overflow: hidden; flex: none; }
.brand span { position: absolute; left: 44px; top: 8px; font: 800 19px/24px Inter, sans-serif; letter-spacing: .3px; white-space: nowrap; }
.tab-space { width: 922.500px; flex: none; }
.tab { position: relative; display: flex; align-items: center; width: 153.750px; padding: 0 9px 2px 9px; flex: none; color: #d5d6d7; font-size: 16.500px; }
.tab::after { content: ""; position: absolute; right: 0; top: 5px; height: 25px; width: 1px; background: #85888a; }
.tab.nosep::after, .tab.current::after { display: none; }
.tab.current { background: #2b2d2c; border: 1px solid #7b7d7f; border-bottom: 0; border-radius: 6px 6px 0 0; padding: 0 8px 3px 8px; }
.fav { width: 20px; height: 20px; }
.title { width: 80px; margin-left: 10px; overflow: hidden; white-space: nowrap; line-height: 26px; letter-spacing: -0.150px; -webkit-mask-image: linear-gradient(90deg, #000 65%, transparent 98%); mask-image: linear-gradient(90deg, #000 65%, transparent 98%); }
.x { width: 14px; height: 14px; margin-left: auto; margin-right: 1px; }
.newtab { width: 16px; height: 16px; margin: 9px 0 0 10px; color: #ddd; }
.winbtns { display: grid; grid-template-columns: repeat(5, 57.250px); margin-left: auto; place-items: center; height: 33px; color: #8c8f91; }
.min { width: 13px; height: 1px; background: #8c8f91; }

/* toolbar */
.toolbar { display: flex; align-items: center; height: 61px; }
.nav { display: grid; grid-template-columns: repeat(4, 44.700px); place-items: center; width: 200px; padding-left: 11px; color: #f1f1f1; }
.nav svg, .actions svg, .ext svg, .info { width: 22px; height: 22px; }
.nav svg:nth-child(-n+2) { width: 18px; height: 18px; }
.dim { color: #7d7f7e; }
.omnibox { display: flex; align-items: center; width: 1513px; height: 45px; padding-left: 12px; margin-top: 0; background: #202124; border-radius: 5px; }
.info { color: #9aa0a6; }
.url { margin-left: 11px; font-size: 16.600px; letter-spacing: .02px; color: #8f9296; white-space: nowrap; }
.url em { font-style: normal; color: #fff; }
.actions { display: grid; grid-template-columns: repeat(4, 44.800px); place-items: center; margin-left: auto; margin-right: 1px; color: #c3c5c6; }
.ext { display: grid; grid-template-columns: 44px 46px 47px 50px; place-items: center; margin-left: 10px; color: #f1f1f1; }
.ext svg:first-child { width: 20px; height: 20px; }
.ext svg:nth-child(3) { width: 28px; height: 28px; }

/* bookmarks */
.bookmarks { display: flex; align-items: center; height: 26px; letter-spacing: 0; }
.bm-list { display: grid; grid-template-columns: 52px 77px 113px 85px 160px 84px 97px 78px 97px 100px; margin-left: 48px; }
.bm-list div { display: flex; align-items: center; gap: 10px; white-space: nowrap; }
.bm-list .tight { gap: 8px; }
.fold { width: 22px; height: 20px; }
.bm-other { display: flex; align-items: center; gap: 10px; margin-left: auto; width: 170px; height: 20px; padding-left: 11px; border-left: 1px solid #6a6c6b; white-space: nowrap; }

/* side panel */
.content { display: flex; flex: none; height: 899px; }
.side { display: flex; flex-direction: column; width: 55px; padding: 10px 0 5px; background: #141615; color: #dfe1e0; flex: none; }
.cell { position: relative; display: grid; place-items: center; height: 50px; }
.side hr { width: 30px; height: 1px; border: 0; background: #4a4c4b; margin: 10px 0 10px 13px; }
.side hr:nth-of-type(2) { height: 2px; }
.addbox { display: grid; place-items: center; width: 31px; height: 30px; border-radius: 4px; background: #454746; }
.nub::after { content: ""; position: absolute; right: 0; top: 10px; width: 4px; height: 30px; border-radius: 3px 0 0 3px; background: #5a5c5b; }
.side-end { margin-top: auto; }
.bell i { position: absolute; left: 35px; top: 5px; width: 12px; height: 12px; border-radius: 50%; background: #ff5a5f; }
.shop { font: 700 7px Inter, sans-serif; fill: #fff; letter-spacing: 0; }

/* application form */
.page { position: relative; flex: 1; background: #f6f5fb; font-size: 14.500px; color: #64728c; }
.stage { height: 674px; background: #e8e8ef; overflow: hidden; }
.card { width: 1559px; height: 700px; margin: 20px 0 0 141px; padding: 15px 30px; background: #fff; border-radius: 25px; }
.card-head { display: flex; justify-content: flex-end; height: 51px; border-bottom: 1px solid #e8eaef; }
.names { display: flex; justify-content: flex-end; padding-right: 3px; margin-top: 46px; }
.field { display: flex; align-items: center; height: 57px; padding: 0 11px 2px; border: 1px solid #e8eaef; border-radius: 15px; color: #74777f; }
.names .mid { width: 493px; border-right: 0; border-radius: 0; }
.names .last { width: 494px; border-radius: 0 15px 15px 0; }
.cols { display: grid; grid-template-columns: 473px 473px; gap: 30px; justify-content: end; align-items: end; padding-right: 3px; }
.contact { margin-top: 19px; }
.cols label { display: block; height: 29px; line-height: 22px; font-weight: 500; font-size: 14.500px; }
.keywords { margin-top: 172px; }
.notes { margin-top: 48px; }
.area { height: 101px; align-items: flex-end; justify-content: flex-end; padding: 3px; }
.powered { margin: 13px 0 0 187px; }
.powered p { height: 31px; line-height: 22px; font-size: 15px; }
.logo { overflow: visible; letter-spacing: 0; }
.l-range { font: 300 37px Lato, sans-serif; fill: #262626; }
.l-hrm { font: 400 25px Lato, sans-serif; fill: #4caf50; }
.l-tag { font: 700 8.700px "Liberation Sans", Arial, sans-serif; fill: #8b8b8e; }
.page footer { margin: 13px 0 0 0; padding-left: 1px; text-align: center; font-size: 16px; letter-spacing: 0; line-height: 22px; }
.page footer u { color: #35405a; }
.thumb { position: absolute; right: 0; top: 0; width: 10px; height: 541px; border-radius: 5px; background: #cbcbdb; }

/* crash page */
.crash { flex: 1; background: #2b2d2c; padding: 223px 0 0 558px; }
.snap { width: 750px; color: #a3a5a4; }
.snap h1 { margin-top: 23px; font-size: 23.800px; font-weight: 400; line-height: 36px; color: #fff; }
.msg { margin-top: 15px; font-size: 17.500px; line-height: 26px; letter-spacing: -0.380px; }
.code { margin-top: 19px; font-size: 11.500px; line-height: 20px; letter-spacing: -0.420px; }
.acts { display: flex; justify-content: space-between; align-items: center; margin-top: 24px; }
.learn { padding-bottom: 2px; color: #50b96a; font-size: 16px; font-weight: 600; }
.reload { display: grid; place-items: center; width: 95px; height: 44px; padding-bottom: 1px; border-radius: 5px; background: #50b96a; color: #fff; font-size: 16px; font-weight: 700; }

/* taskbar */
.taskbar { display: flex; flex: none; height: 50px; background: #101010; }
.start { display: grid; place-items: center; width: 60px; }
.search { display: flex; align-items: center; width: 430px; padding-left: 15px; background: #3f3f3f; border: 1px solid #626262; border-bottom: 0; color: #e2e2e2; font-size: 18px; }
.search span { margin-left: 14px; padding-bottom: 2px; }
.games { margin: 0 4px 2px auto; }
.tv { display: grid; place-items: center; width: 62px; }
.apps { display: grid; grid-template-columns: repeat(6, 62px); }
.apps div { position: relative; display: grid; place-items: center; padding-bottom: 1px; }
.apps .on::after { content: ""; position: absolute; left: 5px; right: 5px; bottom: 0; height: 3px; background: #76b9ed; }
.apps .active { background: #333; }
.apps .active::after { left: 0; right: 0; }
.screen-form .apps .on::after { bottom: 1px; }
.tray { display: grid; grid-template-columns: 30px 31px 28px 31px 33px 41px 96px 47px; margin: 0 18px 0 auto; place-items: center; padding-bottom: 1px; }
.taskbar::after { content: ""; order: 9; width: 1px; margin-right: 5px; background: #666; margin-left: -7px; }
.clock { display: flex; flex-direction: column; align-items: center; line-height: 22px; padding-bottom: 1px; letter-spacing: .1px; }

/* file dialog */
.dialog { position: absolute; left: 9px; top: 2px; width: 1083px; height: 823px; display: flex; flex-direction: column; background: #202020; box-shadow: 0 0 0 1px rgba(90,90,90,.5), 0 8px 22px rgba(0,0,0,.5); font-size: 14.350px; letter-spacing: 0; }
.d-title { display: flex; align-items: center; gap: 5px; height: 37px; padding: 0 15px 1px 9px; background: #000; }
.d-close { margin-left: auto; }
.d-nav { display: flex; align-items: center; height: 51px; padding-bottom: 2px; background: #191919; }
.d-arrows { display: flex; align-items: center; width: 134px; padding-left: 16px; color: #8c8c8c; flex: none; }
.d-arrows svg:nth-child(2) { margin-left: 23px; }
.d-arrows svg:nth-child(3) { margin-left: 17px; }
.d-arrows .up { margin-left: 12px; transform: rotate(90deg); color: #fff; }
.d-addr, .d-search { display: flex; align-items: center; height: 39px; padding-bottom: 1px; border: 1px solid #535353; white-space: nowrap; flex: none; }
.d-addr { width: 672px; padding-left: 5px; }
.d-addr b { width: 29px; padding-left: 9px; font-weight: 400; color: #aaa; line-height: 20px; }
.sep { margin: 0 10.500px; color: #999; }
.drop { margin-left: auto; color: #aaa; }
.ref { display: grid; place-items: center; width: 43px; height: 36px; margin-left: 13px; border-left: 1px solid #242424; }
.d-search { width: 253px; margin-left: 12px; padding-left: 17px; color: #777; }
.d-search span { margin-left: 17px; }
.d-tools { display: flex; align-items: center; height: 38px; padding: 0 19px 0 22px; border-bottom: 1px solid #181818; }
.ot { margin-left: 5px; }
.nf { margin-left: 35px; }
.view { margin-left: auto; }
.vt { margin-left: 12px; }
.pane { margin-left: 29px; }
.help { display: grid; place-items: center; width: 20px; height: 20px; margin-left: 27px; border-radius: 50%; background: #0a6cce; font-weight: 700; }
.d-body { display: flex; height: 597px; }
.tree { width: 191px; padding-top: 1px; background: #191919; overflow: hidden; flex: none; }
.node { display: flex; align-items: center; height: 30px; padding-left: 41px; white-space: nowrap; }
.node > svg:first-child { margin-right: 10px; }
.node > svg:first-child[width="18"] { margin: 0 7px 0 -1px; }
.node > svg:first-child[width="16"] { margin: 0 8px 0 0; }
.node > svg:first-child[width="12"] { margin: 0 10px 0 2px; }
.node.root { height: 40px; padding: 10px 0 0 30px; }
.node.root > svg:first-child { margin-right: 5px; }
.node.sel { height: 28px; margin: 1px 3px 1px 1px; padding-left: 40px; background: #333; }
.clip { width: 105px; overflow: hidden; }
.pin { width: 13px; height: 13px; margin-left: auto; margin-right: 4px; }
.clip + .pin { margin-left: auto; }
.tscroll { display: flex; flex-direction: column; align-items: center; justify-content: space-between; width: 19px; padding: 9px 0 9px; background: #171717; color: #888; flex: none; }
.tscroll i { width: 19px; height: 480px; margin: 58px 0 17px; background: #4d4d4d; }
.list { flex: 1; margin-left: 2px; border-left: 1px solid #2d2d2d; }
.lhead { display: grid; grid-template-columns: 202.500px 200px 150px 100px 150px; height: 33px; padding-top: 1px; color: #dedede; }
.lhead span { position: relative; display: flex; align-items: center; padding-left: 7px; padding-bottom: 1px; border-right: 1px solid #636363; }
.lhead span:first-child { padding-left: 24px; }
.lhead svg { position: absolute; left: 104px; top: 1px; color: #aaa; }
.rows { padding-top: 9px; }
.row { display: grid; grid-template-columns: 23px 159px 200px 150px 83px 100px; align-items: center; width: 777px; height: 27px; margin-left: 21px; padding-left: 7px; color: #dedede; white-space: nowrap; }
.row svg { width: 14px; height: 18px; margin-top: -3px; }
.row span:nth-child(2) { color: #fff; letter-spacing: -0.050px; }
.row span:nth-child(3) { letter-spacing: .1px; }
.row span:nth-child(5) { text-align: right; letter-spacing: -0.200px; }
.row span:nth-child(6) { padding-left: 17px; letter-spacing: -0.250px; }
.picked { background: #777; box-shadow: inset 0 0 0 1px #555; }
.d-foot { position: relative; flex: 1; padding-top: 16px; background: #383838; }
.line { display: flex; padding-right: 20px; justify-content: flex-end; }
.fn { margin: 4px 5px 0 0; }
.combo { display: flex; align-items: center; justify-content: space-between; height: 29px; padding: 0 4px 0 3px; border: 1px solid #9b9b9b; white-space: nowrap; }
.combo svg { transform: scaleY(-1); color: #bbb; }
.name { width: 592px; background: #383838; }
.type { width: 235px; margin-left: 15px; background: #333; }
.btns { gap: 15px; margin-top: 7px; }
.btn { display: grid; place-items: center; width: 110px; height: 33px; border: 1px solid #fff; background: #333; box-shadow: inset 0 0 0 1px #777; }
.btn.main { border-width: 2px; box-shadow: none; }
.grip { position: absolute; right: 4px; bottom: 2px; }

/* annotations */
.mark-box { position: absolute; left: 220px; top: 424px; width: 827px; height: 60px; border: 6px solid #ed1c24; }
.mark-text { position: absolute; left: 764px; top: 496px; font-size: 46px; line-height: 62px; letter-spacing: -1px; color: #ed1c24; }
```
